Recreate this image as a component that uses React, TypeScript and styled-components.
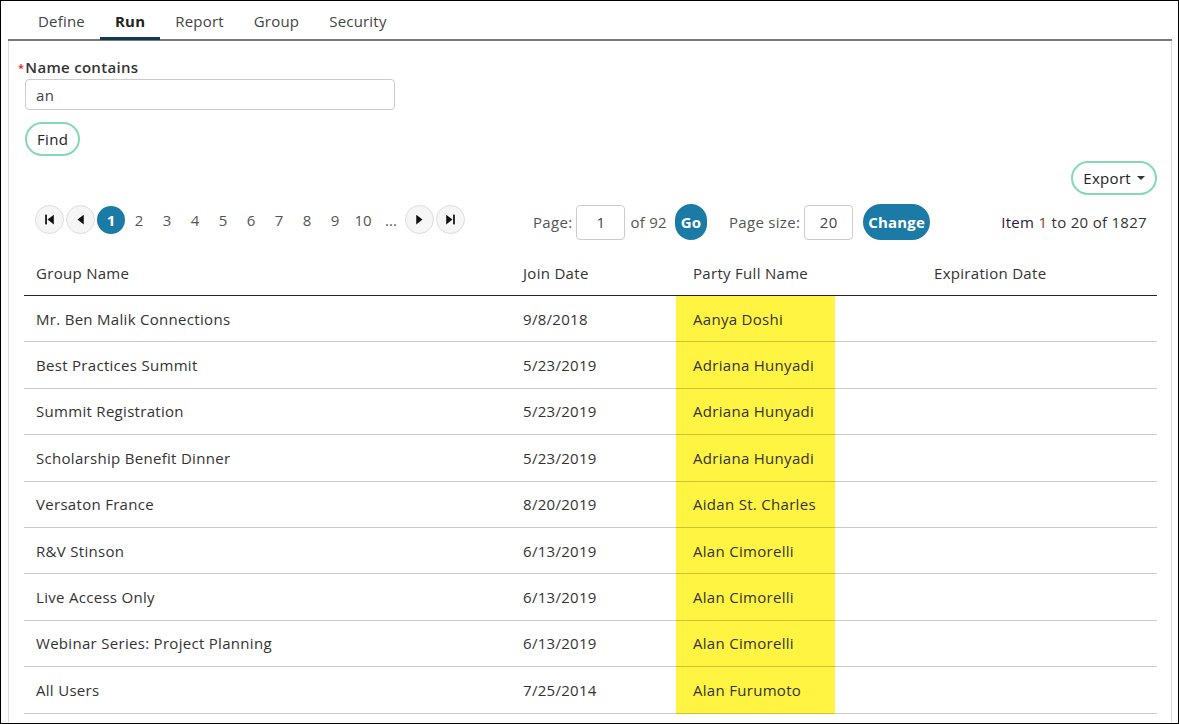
import React from 'react';
import styled, { createGlobalStyle } from 'styled-components';

const GlobalStyle = createGlobalStyle`
  html, body {
    margin: 0;
    padding: 0;
    background: #fff;
  }
  body {
    font-family: 'Open Sans', 'Liberation Sans', sans-serif;
    font-size: 15px;
    letter-spacing: 0.3px;
    color: #333;
  }
  * {
    box-sizing: border-box;
  }
`;

const Frame = styled.div`
  width: 1179px;
  height: 724px;
  border: 1px solid #000;
  overflow: hidden;
  display: flex;
  flex-direction: column;
`;

const TabBar = styled.div`
  display: flex;
  margin: 0 6px 0 7px;
  padding-left: 15px;
  border-bottom: 2px solid #7a7a7a;
  height: 40px;
`;

const Tab = styled.div<{ $active?: boolean }>`
  padding: 3px 15px 0;
  display: flex;
  align-items: center;
  font-size: 15px;
  letter-spacing: 0.2px;
  color: ${(p) => (p.$active ? '#222' : '#444')};
  font-weight: ${(p) => (p.$active ? 700 : 400)};
  border-bottom: 3px solid ${(p) => (p.$active ? '#0f3c4c' : 'transparent')};
  margin-bottom: -1px;
`;

const Panel = styled.div`
  flex: 1;
  margin: 0 6px 0 7px;
  border-left: 1px solid #ddd;
  border-right: 1px solid #ddd;
  padding: 16px 14px 0 15px;
  display: flex;
  flex-direction: column;
`;

const Label = styled.div`
  margin-left: -6px;
  font-weight: 600;
  line-height: 20px;
  height: 22px;
  color: #333;
`;

const Required = styled.span`
  color: #e02020;
  font-size: 11px;
  vertical-align: 1px;
  margin-right: 1px;
`;

const TextInput = styled.div`
  margin-left: 1px;
  width: 370px;
  height: 31px;
  border: 1px solid #ccc;
  border-radius: 4px;
  padding: 0 10px;
  display: flex;
  align-items: center;
  color: #444;
`;

const OutlineButton = styled.button`
  font-family: inherit;
  font-size: 15px;
  letter-spacing: 0.3px;
  color: #222;
  background: #fff;
  border: 2px solid #86d9b6;
  border-radius: 17px;
  height: 34px;
  padding: 0 10px;
  display: inline-flex;
  align-items: center;
  gap: 6px;
  cursor: pointer;
`;

const FindRow = styled.div`
  margin: 12px 0 0 1px;
`;

const ExportRow = styled.div`
  display: flex;
  justify-content: flex-end;
  margin-top: 5px;
`;

const Caret = styled.span`
  width: 0;
  height: 0;
  border-left: 4px solid transparent;
  border-right: 4px solid transparent;
  border-top: 4px solid #333;
`;

const PagerRow = styled.div`
  display: grid;
  grid-template-columns: 509px auto 1fr;
  align-items: center;
  margin-top: 9px;
  height: 36px;
`;

const PagerLeft = styled.div`
  display: flex;
  align-items: center;
  padding-left: 11px;
  margin-top: -5px;
`;

const NavCircle = styled.div`
  width: 29px;
  height: 29px;
  margin-right: 2px;
  border-radius: 50%;
  border: 1px solid #ddd;
  background: #f6f6f6;
  display: flex;
  align-items: center;
  justify-content: center;
`;

const PageNum = styled.div<{ $current?: boolean }>`
  width: 28px;
  height: 28px;
  border-radius: 50%;
  display: flex;
  align-items: center;
  justify-content: center;
  font-size: 15px;
  letter-spacing: 0;
  background: ${(p) => (p.$current ? '#1b7ba6' : 'transparent')};
  color: ${(p) => (p.$current ? '#fff' : '#555')};
  font-weight: ${(p) => (p.$current ? 700 : 400)};
`;

const PagerMiddle = styled.div`
  display: flex;
  align-items: center;
  color: #555;
`;

const SmallInput = styled.div`
  width: 49px;
  height: 35px;
  border: 1px solid #ccc;
  border-radius: 4px;
  display: flex;
  align-items: center;
  justify-content: center;
  color: #444;
  margin: 0 5px 0 4px;
`;

const SolidButton = styled.button<{ $round?: boolean }>`
  font-family: inherit;
  font-size: 15px;
  font-weight: 700;
  letter-spacing: 0.2px;
  color: #fff;
  background: #1b7ba6;
  border: none;
  height: 36px;
  border-radius: 18px;
  padding: ${(p) => (p.$round ? '0' : '0 5px')};
  width: ${(p) => (p.$round ? '32px' : 'auto')};
  margin-left: ${(p) => (p.$round ? '8px' : '5px')};
  margin-right: ${(p) => (p.$round ? '22px' : '0')};
  cursor: pointer;
`;

const ItemCount = styled.div`
  justify-self: end;
  padding-right: 10px;
  color: #333;
`;

const Dark = styled.span`
  color: #2c1836;
`;

const Accent = styled.span`
  color: #8a3b1c;
`;

const Table = styled.div`
  margin-top: 9px;
`;

const COLS = '482px 170px 159px 1fr';

const HeadRow = styled.div`
  display: grid;
  grid-template-columns: ${COLS};
  height: 47px;
  border-bottom: 1px solid #222;
`;

const HeadCell = styled.div<{ $pad: number }>`
  display: flex;
  align-items: center;
  padding-left: ${(p) => p.$pad}px;
  padding-top: 1px;
  color: #333;
`;

const Row = styled.div`
  display: grid;
  grid-template-columns: ${COLS};
  height: 46.4px;
`;

const Cell = styled.div<{ $pad: number; $highlight?: boolean }>`
  display: flex;
  align-items: center;
  padding-left: ${(p) => p.$pad}px;
  border-bottom: 1px solid rgba(0, 0, 0, 0.2);
  background: ${(p) => (p.$highlight ? '#fff442' : 'transparent')};
  color: #333;
`;

const PADS = [12, 17, 17, 99];

const rows = [
  ['Mr. Ben Malik Connections', '9/8/2018', 'Aanya Doshi'],
  ['Best Practices Summit', '5/23/2019', 'Adriana Hunyadi'],
  ['Summit Registration', '5/23/2019', 'Adriana Hunyadi'],
  ['Scholarship Benefit Dinner', '5/23/2019', 'Adriana Hunyadi'],
  ['Versaton France', '8/20/2019', 'Aidan St. Charles'],
  ['R&V Stinson', '6/13/2019', 'Alan Cimorelli'],
  ['Live Access Only', '6/13/2019', 'Alan Cimorelli'],
  ['Webinar Series: Project Planning', '6/13/2019', 'Alan Cimorelli'],
  ['All Users', '7/25/2014', 'Alan Furumoto'],
];

const NavIcon = ({ kind }: { kind: 'first' | 'prev' | 'next' | 'last' }) => (
  <svg width="13" height="13" viewBox="0 0 12 12">
    {kind === 'first' && (
      <>
        <rect x="2" y="1.5" width="1.6" height="9" fill="#111" />
        <polygon points="10,1.5 10,10.5 4.2,6" fill="#111" />
      </>
    )}
    {kind === 'prev' && <polygon points="9,1.5 9,10.5 3.2,6" fill="#111" />}
    {kind === 'next' && <polygon points="3,1.5 3,10.5 8.8,6" fill="#111" />}
    {kind === 'last' && (
      <>
        <polygon points="2,1.5 2,10.5 7.8,6" fill="#111" />
        <rect x="8.4" y="1.5" width="1.6" height="9" fill="#111" />
      </>
    )}
  </svg>
);

const App = () => (
  <>
    <GlobalStyle />
    <Frame>
      <TabBar>
        <Tab>Define</Tab>
        <Tab $active>Run</Tab>
        <Tab>Report</Tab>
        <Tab>Group</Tab>
        <Tab>Security</Tab>
      </TabBar>
      <Panel>
        <Label>
          <Required>*</Required>Name contains
        </Label>
        <TextInput>an</TextInput>
        <FindRow>
          <OutlineButton>Find</OutlineButton>
        </FindRow>
        <ExportRow>
          <OutlineButton>
            Export <Caret />
          </OutlineButton>
        </ExportRow>
        <PagerRow>
          <PagerLeft>
            <NavCircle>
              <NavIcon kind="first" />
            </NavCircle>
            <NavCircle>
              <NavIcon kind="prev" />
            </NavCircle>
            <PageNum $current>1</PageNum>
            {[2, 3, 4, 5, 6, 7, 8, 9, 10].map((n) => (
              <PageNum key={n}>{n}</PageNum>
            ))}
            <PageNum>...</PageNum>
            <NavCircle>
              <NavIcon kind="next" />
            </NavCircle>
            <NavCircle>
              <NavIcon kind="last" />
            </NavCircle>
          </PagerLeft>
          <PagerMiddle>
            Page:
            <SmallInput>1</SmallInput>
            of 92
            <SolidButton $round>Go</SolidButton>
            Page size:
            <SmallInput>20</SmallInput>
            <SolidButton>Change</SolidButton>
          </PagerMiddle>
          <ItemCount>
            <Dark>Item</Dark> <Accent>1</Accent> to 20 of 1827
          </ItemCount>
        </PagerRow>
        <Table>
          <HeadRow>
            <HeadCell $pad={PADS[0]}>Group Name</HeadCell>
            <HeadCell $pad={PADS[1]}>Join Date</HeadCell>
            <HeadCell $pad={PADS[2]}>Party Full Name</HeadCell>
            <HeadCell $pad={PADS[3]}>Expiration Date</HeadCell>
          </HeadRow>
          {rows.map((r, i) => (
            <Row key={i}>
              <Cell $pad={PADS[0]}>{r[0]}</Cell>
              <Cell $pad={PADS[1]}>{r[1]}</Cell>
              <Cell $pad={PADS[2]} $highlight>
                {r[2]}
              </Cell>
              <Cell $pad={PADS[3]} />
            </Row>
          ))}
        </Table>
      </Panel>
    </Frame>
  </>
);

export default App;
